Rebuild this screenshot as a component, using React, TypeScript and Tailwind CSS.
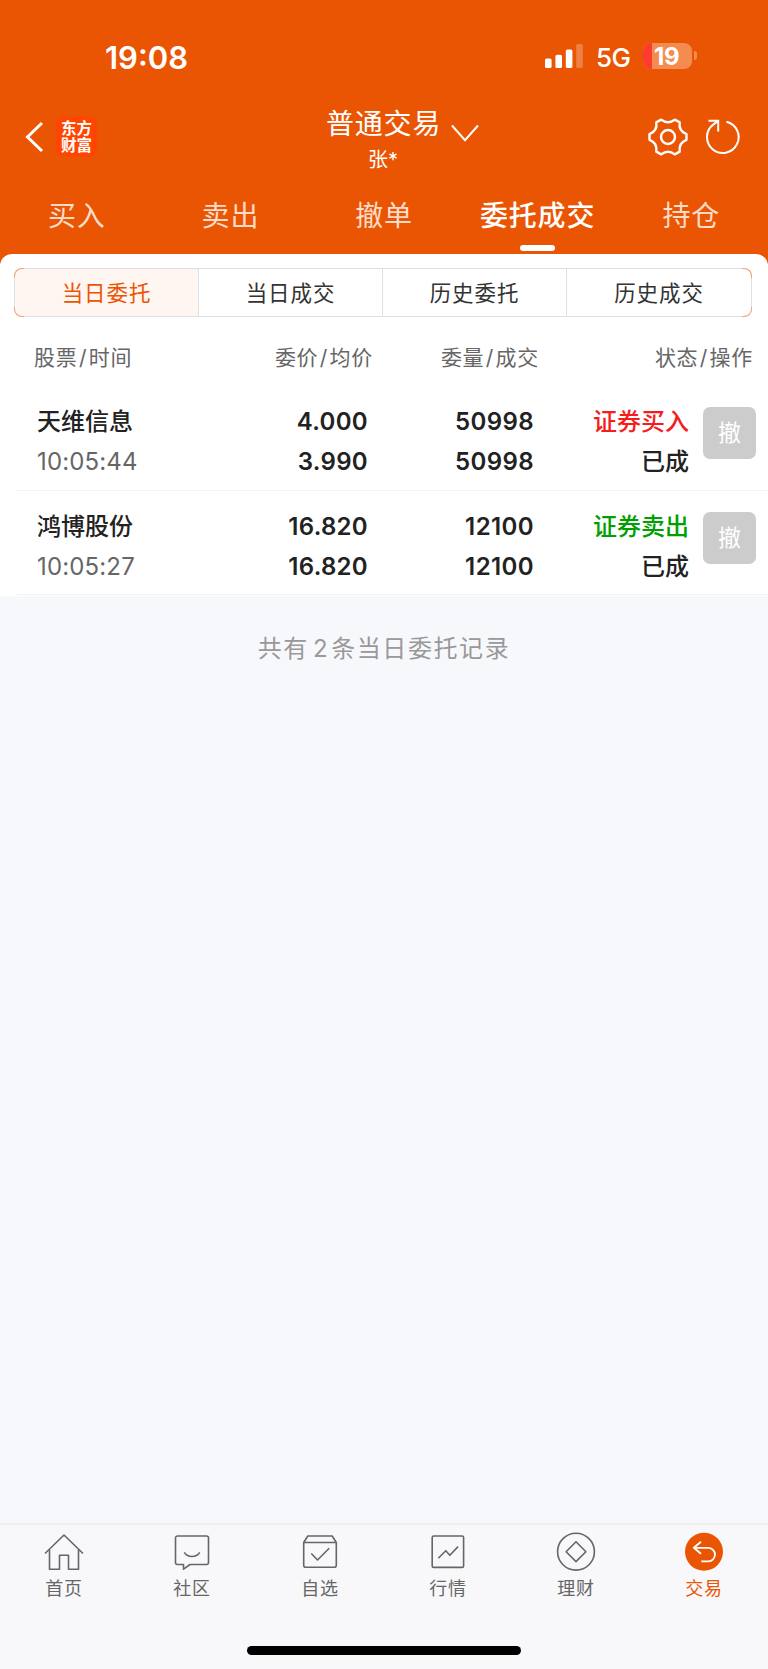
import React, { useState } from 'react';

const TABS = ['买入', '卖出', '撤单', '委托成交', '持仓'];
const SEGMENTS = ['当日委托', '当日成交', '历史委托', '历史成交'];

const ORDERS = [
  { name: '天维信息', time: '10:05:44', price: '4.000', avg: '3.990', qty: '50998', filled: '50998', side: 'buy', status: '已成' },
  { name: '鸿博股份', time: '10:05:27', price: '16.820', avg: '16.820', qty: '12100', filled: '12100', side: 'sell', status: '已成' },
];

const NAV = [
  {
    label: '首页',
    icon: (
      <path d="M1 20.5 20 2l19 18.5M5.5 17v19.2h10V22.3h9v13.9h10V17" />
    ),
  },
  {
    label: '社区',
    icon: (
      <>
        <path d="M5.5 3h29a2 2 0 0 1 2 2v24.5a2 2 0 0 1-2 2H18l-6.5 4.7v-4.7h-6a2 2 0 0 1-2-2V5a2 2 0 0 1 2-2Z" />
        <path d="M12.3 19.3c3.5 5.6 11.9 5.6 15.4 0" />
      </>
    ),
  },
  {
    label: '自选',
    icon: (
      <>
        <path d="M3.7 9.5 7.8 3h24.4l4.1 6.5v22.7a2 2 0 0 1-2 2H5.7a2 2 0 0 1-2-2ZM3.7 9.5h32.6" />
        <path d="m11.3 20.5 6.2 6.5 11.7-11.8" />
      </>
    ),
  },
  {
    label: '行情',
    icon: (
      <>
        <rect x="4.2" y="3" width="31.4" height="31.4" rx="1.5" />
        <path d="m10.3 25.2 7.5-7.5 4 4.6 8.3-8.7" />
      </>
    ),
  },
  {
    label: '理财',
    icon: (
      <>
        <circle cx="20" cy="18.7" r="18.4" />
        <path d="m20 8.8 9.9 9.9-9.9 9.9-9.9-9.9Z" />
      </>
    ),
  },
  {
    label: '交易',
    icon: (
      <>
        <circle cx="20" cy="18.7" r="19" fill="#ea5504" stroke="none" />
        <path d="M17 8.8 9.8 14.8l7.2 6M10 14.9h14.3a6.7 6.7 0 0 1 0 13.4H17.3" stroke="#fff" strokeWidth="1.8" />
      </>
    ),
  },
];

function StatusBar() {
  return (
    <div className="flex h-[100px] items-start pt-[38px] text-white">
      <div className="ml-[105px] w-[440px] text-[31px] leading-10 font-semibold">19:08</div>
      <svg width="38" height="26" viewBox="0 0 38 26" fill="#fff" className="mt-[5px]">
        <rect x="0" y="15.5" width="6.6" height="9.5" rx="1.6" />
        <rect x="10.4" y="11.8" width="6.6" height="13.2" rx="1.6" />
        <rect x="20.8" y="6.5" width="6.6" height="18.5" rx="1.6" />
        <rect x="31.2" y="1" width="6.6" height="24" rx="1.6" opacity=".25" />
      </svg>
      <div className="ml-[13px] w-[47px] text-[26px] leading-10 font-medium tracking-[-0.5px]">5G</div>
      <div className="mt-[5px] flex h-[26px] w-[49px] rounded-[8px] bg-[#f48c51]">
        <div className="h-full w-[9px] rounded-l-[8px] bg-[#ff3b30]" />
        <div className="pl-[2px] text-[24px] leading-[27px] font-bold tracking-[-0.3px]">19</div>
      </div>
      <div className="mt-[13px] ml-[2px] h-[9px] w-[3px] rounded-r-full bg-[#f48c51]" />
    </div>
  );
}

function TitleBar() {
  return (
    <div className="flex h-[80px] items-start text-white">
      <svg width="20" height="32" viewBox="0 0 20 32" fill="none" stroke="#fff" strokeWidth="3" className="mt-[21px] ml-[24px]">
        <path d="M18 2 3.5 16 18 30" />
      </svg>
      <div className="mt-[16px] ml-[12px] h-[41px] w-[41px] rounded-[8px] bg-[#ff4500] pt-[3px] text-center font-['Noto_Sans_CJK_SC',sans-serif] text-[15.5px] leading-[17px] font-bold">
        <div>东方</div>
        <div>财富</div>
      </div>
      <div className="ml-[229px] flex w-[125px] flex-col">
        <span className="mt-[4px] text-[28px] leading-10 tracking-[0.8px] whitespace-nowrap">普通交易</span>
        <span className="mt-[1px] ml-[42px] text-[20px] leading-[30px]">张*</span>
      </div>
      <svg width="28" height="18" viewBox="0 0 28 18" fill="none" stroke="#fff" strokeWidth="2" className="mt-[24px]">
        <path d="m1 1.5 13 14.7L27 1.5" />
      </svg>
      <svg width="40" height="40" viewBox="-20 -20 40 40" fill="none" stroke="#fff" strokeWidth="2.4" strokeLinejoin="round" className="mt-[17px] ml-[168.5px]">
        <circle r="7" />
        <path d="M-6.8-17.4Q0-12 6.8-17.4L11.7-14.6Q10.4-6 18.5-2.8V2.8Q10.4 6 11.7 14.6L6.8 17.4Q0 12-6.8 17.4L-11.7 14.6Q-10.4 6-18.5 2.8V-2.8Q-10.4-6-11.7-14.6Z" />
      </svg>
      <svg width="36" height="40" viewBox="-18 -20 36 40" fill="none" stroke="#fff" strokeWidth="2" className="mt-[17px] ml-[17px]">
        <path d="M3.5-15.2A15.8 15.8 0 1 1-9.5-12.6L-5-16M-14.5-16.2h9.7V-5.5" />
      </svg>
    </div>
  );
}

export default function App() {
  const [tab, setTab] = useState(3);
  const [segment, setSegment] = useState(0);

  return (
    <div className="flex h-[1669px] w-[768px] flex-col overflow-hidden bg-[#f7f8fb] font-[Inter,'Noto_Sans_CJK_SC',sans-serif]">
      <header className="h-[270px] bg-[#ea5504]">
        <StatusBar />
        <TitleBar />
        <div className="grid h-[74px] grid-cols-5">
          {TABS.map((label, i) => (
            <button key={label} onClick={() => setTab(i)} className="flex flex-col items-center pt-[16px]">
              <span className={`text-[28px] leading-10 tracking-[0.8px] ${i === tab ? 'font-medium text-white' : 'text-[#fcdcc9]'}`}>{label}</span>
              {i === tab && <span className="mt-[9px] h-[6px] w-[35px] rounded-full bg-white" />}
            </button>
          ))}
        </div>
      </header>

      <main className="relative -mt-4 h-[342px] rounded-t-[12px] bg-white pt-[14px]">
        <div className="relative mr-[16px] ml-[14px] h-[49px] rounded-[8px] border border-[#dcdfe6]">
          <div className="grid h-full grid-cols-4">
            {SEGMENTS.map((label, i) => (
              <button
                key={label}
                onClick={() => setSegment(i)}
                className={`border-[#dcdfe6] pt-px text-[21.5px] tracking-[0.9px] not-last:border-r first:rounded-l-[7px] last:rounded-r-[7px] ${
                  i === segment ? 'bg-[#fff5f1] text-[#ea5504]' : 'text-[#333]'
                }`}
              >
                {label}
              </button>
            ))}
          </div>
          {/* Rounded corners keep the brand tint */}
          <i className="absolute -top-px -left-px size-[10px] rounded-tl-[8px] border-t border-l border-[#f2a47c]" />
          <i className="absolute -bottom-px -left-px size-[10px] rounded-bl-[8px] border-b border-l border-[#f2a47c]" />
          <i className="absolute -top-px -right-px size-[10px] rounded-tr-[8px] border-t border-r border-[#f2a47c]" />
          <i className="absolute -right-px -bottom-px size-[10px] rounded-br-[8px] border-r border-b border-[#f2a47c]" />
        </div>

        <div className="mt-[26px] grid h-[30px] grid-cols-[339px_166px_214px] pl-[34px] text-[21px] leading-[30px] text-[#666]">
          <div className="flex">
            <span className="tracking-[0.7px]">股票<span className="px-[1.5px]">/</span>时间</span>
            <span className="ml-auto tracking-[0.7px]">委价<span className="px-[1.5px]">/</span>均价</span>
          </div>
          <span className="text-right tracking-[0.7px]">委量<span className="px-[1.5px]">/</span>成交</span>
          <span className="text-right tracking-[0.7px]">状态<span className="px-[1.5px]">/</span>操作</span>
        </div>

        <div className="mt-[13px]">
          {ORDERS.map((o) => (
            <div key={o.time} className="ml-[17px] h-[104.7px] border-b border-[#f2f3f6] pt-[16px]">
              <div className="grid grid-cols-[331px_166px_155px_53px] pl-[20px] text-[24px] leading-10 font-semibold text-[#222]">
                <div className="flex justify-between">
                  <div>
                    <div className="font-medium">{o.name}</div>
                    <div className="font-normal tracking-[0.15px] text-[#666]">{o.time}</div>
                  </div>
                  <div className="text-right tracking-[0.3px]">
                    <div>{o.price}</div>
                    <div>{o.avg}</div>
                  </div>
                </div>
                <div className="text-right tracking-[0.4px]">
                  <div>{o.qty}</div>
                  <div>{o.filled}</div>
                </div>
                <div className="text-right font-medium">
                  <div className={o.side === 'buy' ? 'text-[#f71c1c]' : 'text-[#00a000]'}>{o.side === 'buy' ? '证券买入' : '证券卖出'}</div>
                  <div>{o.status}</div>
                </div>
                <button className="mt-[5px] ml-[14px] h-[52px] w-[53px] rounded-[7px] bg-[#ccc] text-[23px] leading-[52px] font-normal text-white">撤</button>
              </div>
            </div>
          ))}
        </div>
      </main>

      <p className="mt-[33px] text-center text-[24px] leading-10 tracking-[1.6px] text-[#999]">
        共有<span className="pr-[2px] pl-[4px]">2</span>条当日委托记录
      </p>

      <footer className="mt-auto h-[146px] border-t-2 border-[#eceef3] bg-[#f8f8fb]">
        <nav className="grid h-[121px] grid-cols-6">
          {NAV.map((item, i) => (
            <div key={item.label} className={`flex flex-col items-center pt-[8px] ${i === 5 ? 'text-[#ea5504]' : 'text-[#666]'}`}>
              <svg width="40" height="40" viewBox="0 0 40 40" fill="none" stroke="currentColor" strokeWidth="1.6" strokeLinejoin="round" className="overflow-visible">
                {item.icon}
              </svg>
              <span className="mt-[3px] text-[18px] leading-[26px] tracking-[0.7px]">{item.label}</span>
            </div>
          ))}
        </nav>
        <div className="mx-auto h-[9px] w-[274px] rounded-full bg-black" />
      </footer>
    </div>
  );
}
